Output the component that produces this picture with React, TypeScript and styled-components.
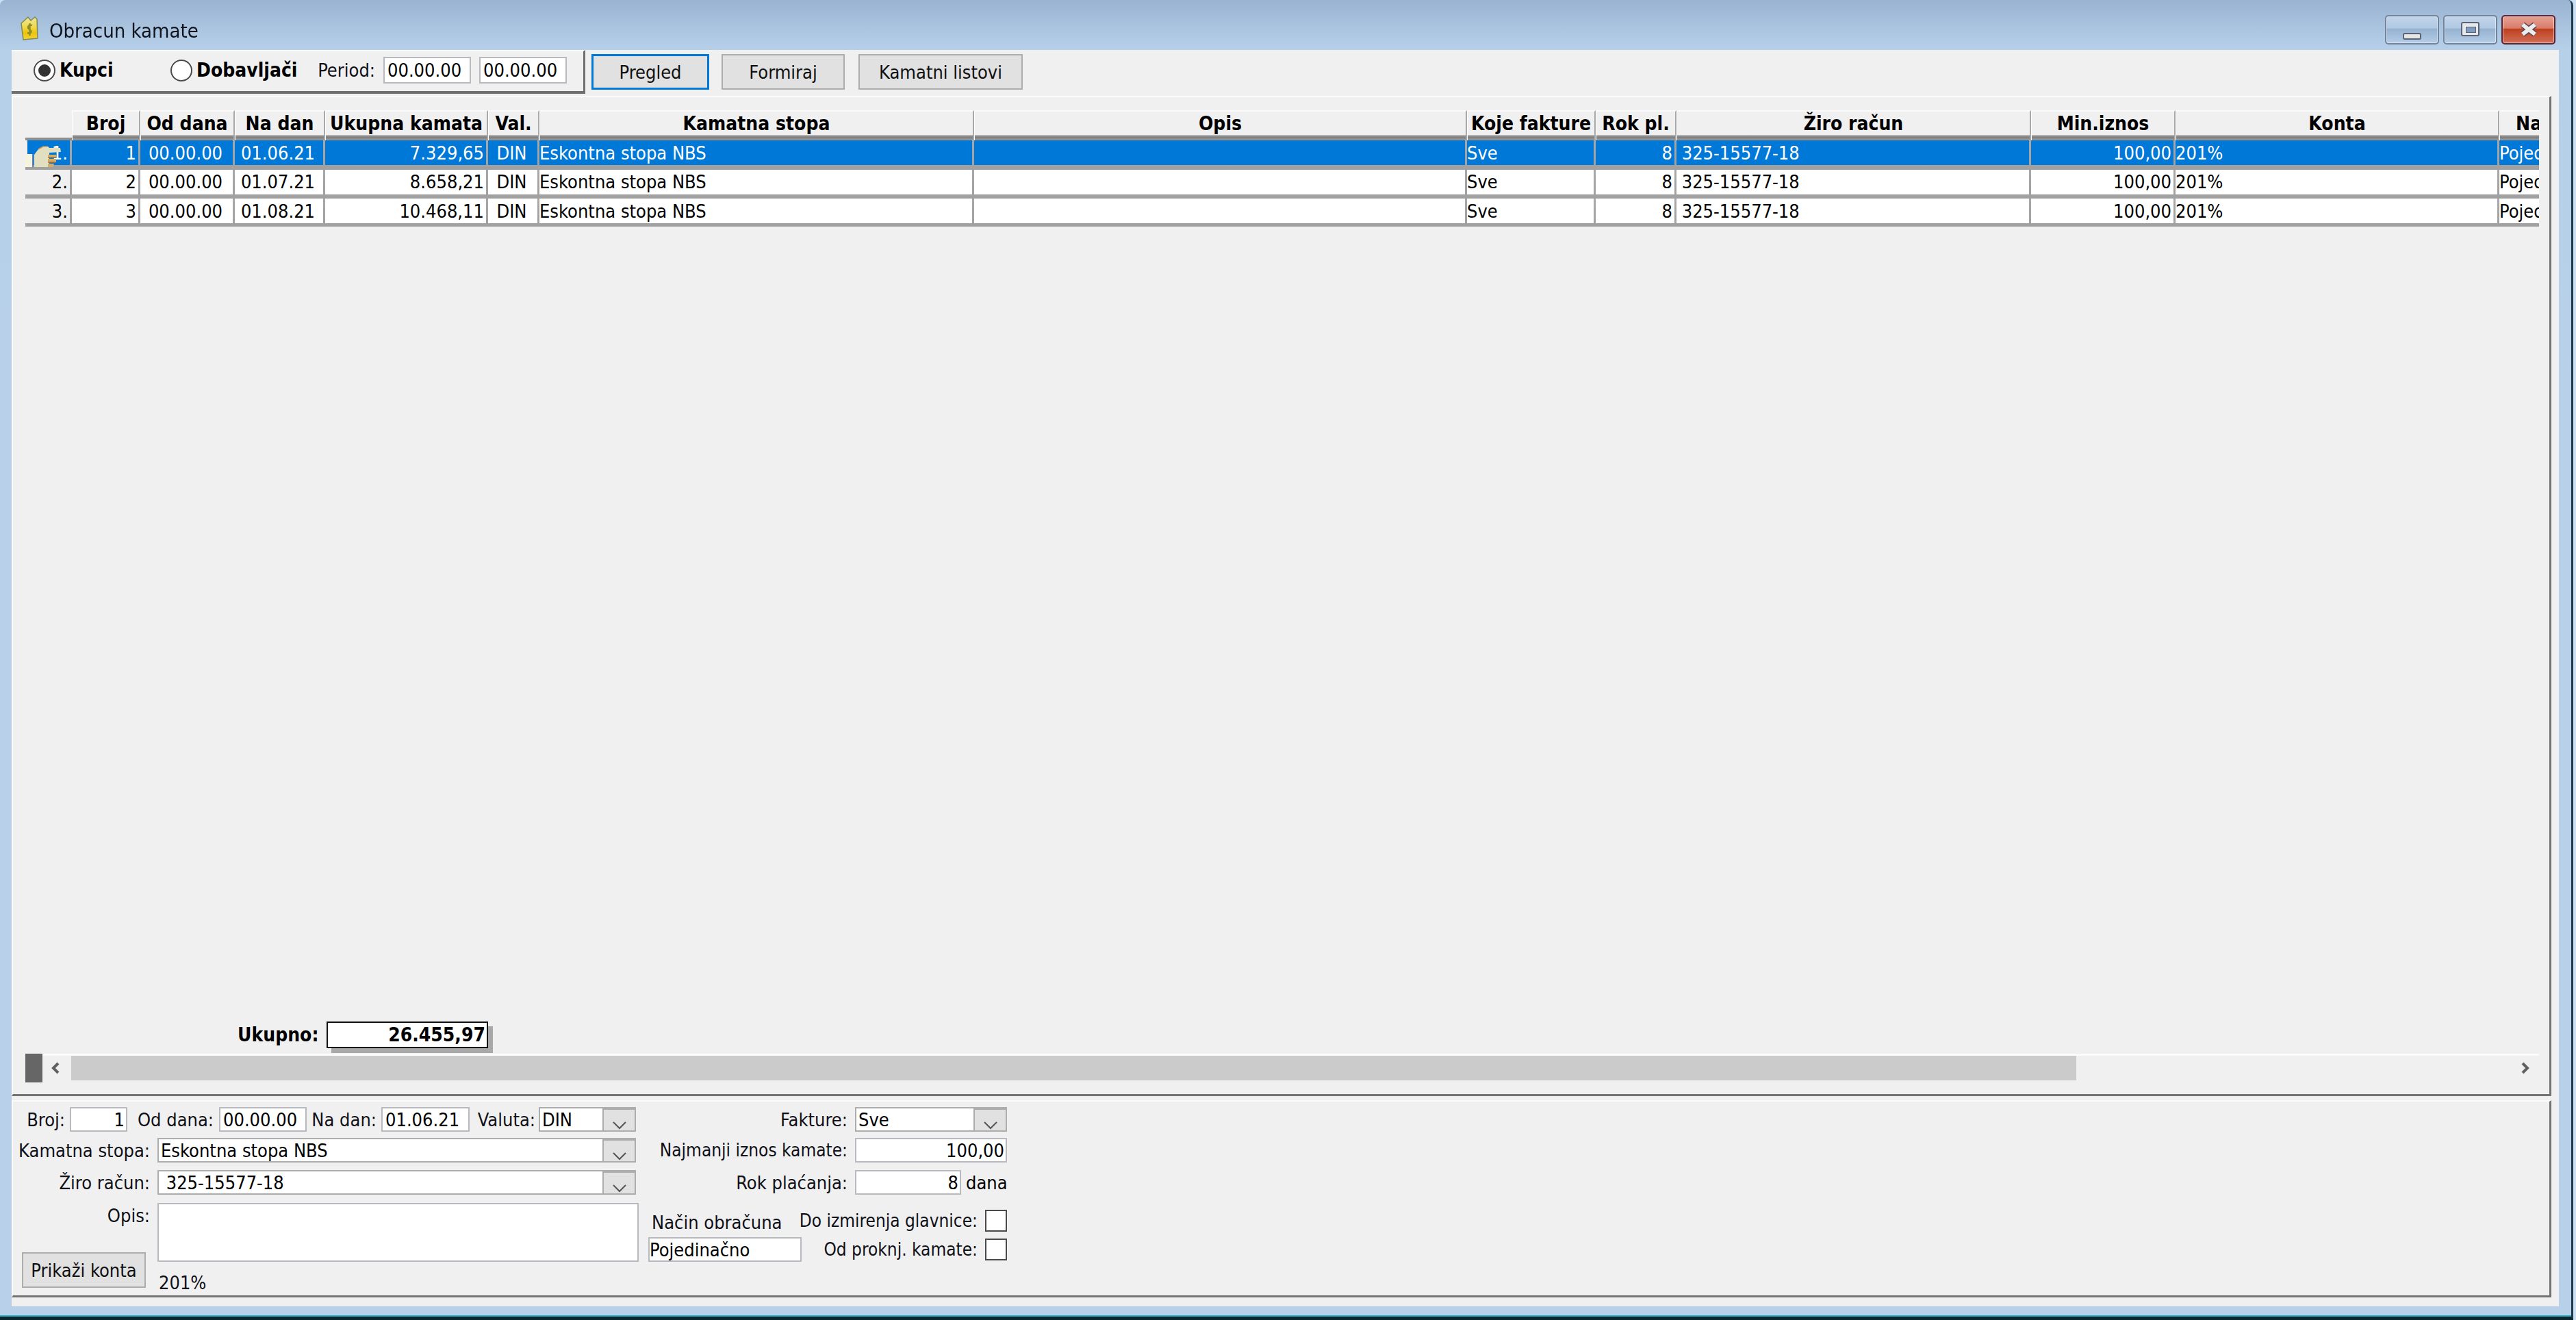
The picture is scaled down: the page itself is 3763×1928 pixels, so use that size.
import React from 'react';
import styled, { createGlobalStyle } from 'styled-components';

const GlobalStyle = createGlobalStyle`
	html, body {
		margin: 0;
		padding: 0;
		height: 1928px;
		overflow: hidden;
		background: #cddff2;
	}
	* {
		box-sizing: border-box;
	}
`;

const FONT = `'DejaVu Sans', 'Liberation Sans', sans-serif`;

const Window = styled.div`
	width: 3759px;
	height: 1928px;
	display: flex;
	flex-direction: column;
	padding-bottom: 15px;
	border-right: 3px solid #1d3a4a;
	border-bottom: 5px solid #0c2430;
	border-top-left-radius: 8px;
	border-top-right-radius: 8px;
	box-shadow: inset 0 -2px 0 #2fb5c4;
	background: linear-gradient(#9ab3d1 0, #b7d0ea 73px, #b9d0ea 100%);
	font-family: ${FONT};
	font-stretch: condensed;
	font-size: 27px;
	color: #000;
	filter: blur(0.5px);
`;

const TitleBar = styled.div`
	height: 73px;
	flex: none;
	display: flex;
	padding: 0 23px 0 30px;
`;

const TitleIcon = styled.svg`
	width: 26px;
	height: 36px;
	margin-top: 23px;
	flex: none;
`;

const TitleText = styled.div`
	margin: 29px 0 0 16px;
	font-size: 29px;
	line-height: 32px;
	color: #10141c;
`;

const Controls = styled.div`
	margin: 22px 0 0 auto;
	display: flex;
	gap: 6px;
`;

const ControlButton = styled.div<{ $close?: boolean }>`
	width: 79px;
	height: 43px;
	border-radius: 5px;
	display: flex;
	align-items: center;
	justify-content: center;
	border: 2px solid ${(p) => (p.$close ? '#5a2636' : '#71849c')};
	box-shadow: inset 0 0 0 1px rgba(255, 255, 255, 0.5);
	background: ${(p) =>
		p.$close
			? 'linear-gradient(#e8a294 0, #d87c6a 44%, #bf3f1e 47%, #d0705a 100%)'
			: 'linear-gradient(#c2d5eb 0, #b0c8e2 44%, #95b2d0 47%, #b5cde8 100%)'};
`;

const MinGlyph = styled.div`
	width: 27px;
	height: 10px;
	margin-top: 19px;
	background: #e6e6e6;
	border: 2px solid #5a6474;
	border-radius: 3px;
`;

const MaxGlyph = styled.div`
	width: 27px;
	height: 21px;
	margin-top: -2px;
	background: #e6e8ec;
	border: 2px solid #5a6474;
	border-radius: 3px;
	padding: 5px 5px;
	&::after {
		content: '';
		display: block;
		width: 100%;
		height: 100%;
		background: #7f9cbf;
		border: 1px solid #5a6474;
	}
`;

const CloseGlyph = styled.svg`
	width: 30px;
	height: 22px;
	margin-top: -1px;
`;

const Client = styled.div`
	flex: 1;
	min-height: 0;
	margin: 0 18px 0 17px;
	background: #f0f0f0;
	display: flex;
	flex-direction: column;
`;

const Toolbar = styled.div`
	height: 64px;
	flex: none;
	display: flex;
`;

const ToolPanel = styled.div`
	width: 838px;
	display: flex;
	align-items: center;
	padding: 0 0 3px 32px;
	border-top: 2px solid #fbfbfb;
	border-right: 3px solid #6f6f6f;
	border-bottom: 4px solid #6f6f6f;
`;

const RadioItem = styled.div<{ $w: number }>`
	width: ${(p) => p.$w}px;
	display: flex;
	align-items: center;
	gap: 6px;
	font-weight: bold;
	font-size: 28px;
`;

const RadioDot = styled.span<{ $on?: boolean }>`
	width: 32px;
	height: 32px;
	flex: none;
	border-radius: 50%;
	border: 2px solid #4a4a4a;
	background: #fff;
	display: flex;
	align-items: center;
	justify-content: center;
	&::after {
		content: '';
		width: 18px;
		height: 18px;
		border-radius: 50%;
		background: ${(p) => (p.$on ? '#333' : 'transparent')};
	}
`;

const ToolButtons = styled.div`
	display: flex;
	padding: 6px 0 0 9px;
	align-items: flex-start;
`;

const Button = styled.div<{ $w: number; $primary?: boolean; $ml?: number; $mt?: number }>`
	width: ${(p) => p.$w}px;
	height: 52px;
	flex: none;
	margin-left: ${(p) => p.$ml ?? 0}px;
	margin-top: ${(p) => p.$mt ?? 0}px;
	display: flex;
	align-items: center;
	justify-content: center;
	background: #e1e1e1;
	border: ${(p) => (p.$primary ? '3px solid #0078d7' : '2px solid #adadad')};
	color: #101010;
`;

const TextBox = styled.div<{ $w: number; $h?: number; $right?: boolean; $ml?: number; $pad?: number }>`
	width: ${(p) => p.$w}px;
	height: ${(p) => p.$h ?? 36}px;
	margin-left: ${(p) => p.$ml ?? 0}px;
	flex: none;
	background: #fff;
	border: 2px solid #b9b9c0;
	padding: 0 ${(p) => p.$pad ?? 4}px;
	display: flex;
	align-items: center;
	justify-content: ${(p) => (p.$right ? 'flex-end' : 'flex-start')};
	white-space: nowrap;
	overflow: hidden;
`;

const MainPanel = styled.div`
	margin: 3px 11px 0 0;
	height: 1461px;
	flex: none;
	display: flex;
	flex-direction: column;
	padding: 19px 15px 17px 18px;
	border-top: 2px solid #fbfbfb;
	border-left: 2px solid #fbfbfb;
	border-right: 3px solid #737373;
	border-bottom: 3px solid #737373;
`;

const COLUMNS = '68px 100px 138px 132px 238px 75px 635px 720px 188px 118px 518px 211px 473px 270px';

const Table = styled.div`
	overflow: hidden;
	flex: none;
	height: 170px;
`;

const TableHead = styled.div`
	display: grid;
	grid-template-columns: ${COLUMNS};
	width: max-content;
	height: 44px;
`;

const HeadBlank = styled.div`
	align-self: end;
	height: 4px;
	background: #8f8f8f;
`;

const HeadCell = styled.div`
	height: 44px;
	padding-bottom: 8px;
	border-top: 2px solid #fafafa;
	border-right: 2px solid #a8a8a8;
	border-left: 1px solid #fff;
	font-weight: bold;
	font-size: 28px;
	display: flex;
	align-items: center;
	justify-content: center;
	white-space: nowrap;
	overflow: hidden;
	background: linear-gradient(#f0f0f0 0 34px, #c4c4c4 34px, #7d7d7d 37px, #9c9c9c 42px);
`;

const BodyRow = styled.div`
	display: grid;
	grid-template-columns: ${COLUMNS};
	width: max-content;
	height: 42.5px;
	background: linear-gradient(#a8a8a8 0, #a0a0a0 100%);
`;

const Cell = styled.div<{ $selected?: boolean; $align?: 'start' | 'center' | 'end' }>`
	height: 36px;
	margin-right: 3px;
	padding: 0 3px 0 0;
	display: flex;
	align-items: center;
	justify-content: ${(p) => (p.$align === 'end' ? 'flex-end' : p.$align === 'center' ? 'center' : 'flex-start')};
	white-space: nowrap;
	overflow: hidden;
	background: ${(p) => (p.$selected ? '#0078d7' : '#fff')};
	color: ${(p) => (p.$selected ? '#fff' : '#000')};
`;

const IndicatorCell = styled(Cell)`
	position: relative;
	overflow: visible;
	background: ${(p) => (p.$selected ? '#0078d7' : '#f0f0f0')};
	border-left: ${(p) => (p.$selected ? '3px solid #f0f0f0' : 'none')};
`;

const HandPointer = styled.svg`
	position: absolute;
	left: -3px;
	top: 8px;
	width: 58px;
	height: 31px;
`;

const TotalsRow = styled.div`
	margin-top: auto;
	display: flex;
	align-items: center;
	padding-left: 310px;
	font-weight: bold;
	font-size: 28px;
`;

const TotalsLabel = styled.div`
	width: 130px;
`;

const TotalsBox = styled.div`
	width: 236px;
	height: 39px;
	background: #fff;
	border: 2px solid #111;
	box-shadow: 7px 7px 0 #a8a8a8;
	padding: 0 2px;
	display: flex;
	align-items: center;
	justify-content: flex-end;
`;

const ScrollRow = styled.div`
	margin-top: 8px;
	height: 42px;
	flex: none;
	display: flex;
`;

const ScrollGrip = styled.div`
	width: 25px;
	background: #666;
`;

const ScrollTrack = styled.div`
	flex: 1;
	height: 39px;
	border-top: 3px solid #fbfbfb;
	display: flex;
`;

const ScrollButton = styled.div<{ $end?: boolean }>`
	display: flex;
	align-items: center;
	flex: ${(p) => (p.$end ? '1' : 'none')};
	width: ${(p) => (p.$end ? 'auto' : '42px')};
	justify-content: ${(p) => (p.$end ? 'flex-end' : 'flex-start')};
	padding: ${(p) => (p.$end ? '0 12px 0 0' : '0 0 0 11px')};
`;

const ScrollArrow = styled.svg`
	width: 17px;
	height: 18px;
	flex: none;
`;

const ScrollThumb = styled.div`
	width: 2929px;
	height: 100%;
	background: #cbcbcb;
`;

const FormPanel = styled.div`
	margin: 6px 11px 0 0;
	height: 288px;
	flex: none;
	display: flex;
	padding-top: 8px;
	border-top: 2px solid #fbfbfb;
	border-left: 2px solid #fbfbfb;
	border-right: 3px solid #737373;
	border-bottom: 3px solid #737373;
`;

const LeftForm = styled.div`
	width: 928px;
	flex: none;
	display: grid;
	grid-template-rows: 35px 37px 38px auto;
	row-gap: 10px;
	align-content: start;
`;

const FormRow = styled.div<{ $pl?: number }>`
	display: flex;
	align-items: flex-start;
	padding-left: ${(p) => p.$pl ?? 11}px;
`;

const Label = styled.div<{ $w: number; $ml?: number; $mr?: number; $fs?: number }>`
	width: ${(p) => p.$w}px;
	height: 36px;
	flex: none;
	margin-left: ${(p) => p.$ml ?? 0}px;
	margin-right: ${(p) => p.$mr ?? 0}px;
	font-size: ${(p) => p.$fs ?? 27}px;
	display: flex;
	align-items: center;
	justify-content: flex-end;
	white-space: nowrap;
	color: #101018;
`;

const Combo = styled.div<{ $w: number }>`
	width: ${(p) => p.$w}px;
	height: 36px;
	flex: none;
	display: flex;
	background: #adadad;
	padding: 2px;
`;

const ComboValue = styled.div`
	flex: 1;
	min-width: 0;
	background: #fff;
	padding: 0 3px;
	display: flex;
	align-items: center;
	white-space: nowrap;
`;

const ComboArrow = styled.div`
	width: 45px;
	margin: 2px 0 0 2px;
	background: #e1e1e1;
	display: flex;
	align-items: flex-end;
	justify-content: center;
	padding-bottom: 1px;
`;

const ComboChevron = styled.svg`
	width: 22px;
	height: 12px;
`;

const OpisColumn = styled.div`
	width: 200px;
	flex: none;
	display: flex;
	flex-direction: column;
`;

const OpisBody = styled.div`
	display: flex;
	flex-direction: column;
`;

const AccountsText = styled.div`
	margin-top: 18px;
	padding-left: 2px;
	line-height: 26px;
	color: #101018;
`;

const RightForm = styled.div`
	width: 524px;
	flex: none;
	display: grid;
	grid-template-columns: minmax(0, 1fr);
	grid-template-rows: 35px 37px 38px auto;
	row-gap: 10px;
	align-content: start;
`;

const RightRow = styled.div`
	display: flex;
	align-items: flex-start;
`;

const Unit = styled.div`
	height: 36px;
	margin-left: 7px;
	display: flex;
	align-items: center;
`;

const BottomBlock = styled.div`
	display: flex;
	align-items: flex-start;
`;

const MethodColumn = styled.div`
	width: 224px;
	flex: none;
	display: flex;
	flex-direction: column;
`;

const MethodLabel = styled.div`
	height: 36px;
	margin: 10px 0 4px 5px;
	display: flex;
	align-items: center;
	white-space: nowrap;
	color: #101018;
`;

const CheckColumn = styled.div`
	flex: 1;
	min-width: 0;
	display: flex;
	flex-direction: column;
	align-items: flex-end;
	gap: 10px;
	padding-top: 10px;
`;

const CheckRow = styled.div`
	display: flex;
	align-items: center;
	gap: 11px;
	height: 32px;
	font-size: 26px;
	white-space: nowrap;
	color: #101018;
`;

const CheckBox = styled.span`
	width: 32px;
	height: 32px;
	flex: none;
	background: #fff;
	border: 2px solid #4a4a4a;
`;

const columnsText = [
	'Broj',
	'Od dana',
	'Na dan',
	'Ukupna kamata',
	'Val.',
	'Kamatna stopa',
	'Opis',
	'Koje fakture',
	'Rok pl.',
	'Žiro račun',
	'Min.iznos',
	'Konta',
	'Način obračuna',
];

const rows = [
	{ no: 1, to: '01.06.21', total: '7.329,65' },
	{ no: 2, to: '01.07.21', total: '8.658,21' },
	{ no: 3, to: '01.08.21', total: '10.468,11' },
];

const Chevron = () => (
	<ComboChevron viewBox="0 0 22 12">
		<polyline points="2,1 11,10 20,1" fill="none" stroke="#555" strokeWidth="2" />
	</ComboChevron>
);

const JarIcon = () => (
	<TitleIcon viewBox="0 0 26 36">
		<defs>
			<linearGradient id="jarFill" x1="0" y1="0" x2="0" y2="1">
				<stop offset="0" stopColor="#efe79a" />
				<stop offset="0.45" stopColor="#efd84a" />
				<stop offset="0.7" stopColor="#eec40a" />
				<stop offset="1" stopColor="#f2d23a" />
			</linearGradient>
		</defs>
		<path d="M1 11 L11 2 L15 7 L21 2 L24 5 L25 33 L4 35 Z" fill="url(#jarFill)" stroke="#7d8a58" strokeWidth="1.5" />
		<path d="M17 14 C11 12 9 18 13 20 C17 22 16 27 10 25 M13.5 11 L13.5 29" fill="none" stroke="#8f8f2a" strokeWidth="2.5" />
	</TitleIcon>
);

const Hand = () => (
	<HandPointer viewBox="0 0 58 31">
		<rect x="0" y="12" width="10" height="19" fill="#f6f3dc" />
		<rect x="10" y="12" width="2" height="19" fill="#5f86b8" />
		<path d="M13 31 L13 13 L19 5 L26 1 L33 1 L35 3 L51 3 L52 9 L35 10 L35 31 Z" fill="#e2dfc0" />
		<path d="M33 13 L45 13 L46 17 L33 17 Z M33 19 L45 19 L45 24 L33 24 Z M33 26 L42 26 L41 31 L33 31 Z" fill="#d2ad6c" />
		<path d="M33 17 L45 17 M33 24 L44 24" stroke="#a5702e" strokeWidth="1.5" />
		<path d="M19 5 L26 1 L33 1" fill="none" stroke="#c89a58" strokeWidth="1.5" />
	</HandPointer>
);

export default function App() {
	return (
		<>
			<GlobalStyle />
			<Window>
				<TitleBar>
					<JarIcon />
					<TitleText>Obracun kamate</TitleText>
					<Controls>
						<ControlButton>
							<MinGlyph />
						</ControlButton>
						<ControlButton>
							<MaxGlyph />
						</ControlButton>
						<ControlButton $close>
							<CloseGlyph viewBox="0 0 30 22">
								<path d="M6 4 L24 18 M24 4 L6 18" fill="none" stroke="#5c4a50" strokeWidth="9" />
								<path d="M6 4 L24 18 M24 4 L6 18" fill="none" stroke="#ececec" strokeWidth="6" />
							</CloseGlyph>
						</ControlButton>
					</Controls>
				</TitleBar>
				<Client>
					<Toolbar>
						<ToolPanel>
							<RadioItem $w={200}>
								<RadioDot $on />
								Kupci
							</RadioItem>
							<RadioItem $w={215}>
								<RadioDot />
								Dobavljači
							</RadioItem>
							<Label $w={84} $mr={12}>Period:</Label>
							<TextBox $w={128} $h={39}>00.00.00</TextBox>
							<TextBox $w={128} $h={39} $ml={12}>00.00.00</TextBox>
						</ToolPanel>
						<ToolButtons>
							<Button $w={172} $primary>Pregled</Button>
							<Button $w={180} $ml={18}>Formiraj</Button>
							<Button $w={240} $ml={20}>Kamatni listovi</Button>
						</ToolButtons>
					</Toolbar>
					<MainPanel>
						<Table>
							<TableHead>
								<HeadBlank />
								{columnsText.map((c) => (
									<HeadCell key={c}>{c}</HeadCell>
								))}
							</TableHead>
							{rows.map((r, i) => {
								const sel = i === 0;
								return (
									<BodyRow key={r.no}>
										<IndicatorCell $selected={sel} $align="end">
											{r.no}.
											{sel && <Hand />}
										</IndicatorCell>
										<Cell $selected={sel} $align="end">{r.no}</Cell>
										<Cell $selected={sel} $align="center">00.00.00</Cell>
										<Cell $selected={sel} $align="center">{r.to}</Cell>
										<Cell $selected={sel} $align="end">{r.total}</Cell>
										<Cell $selected={sel} $align="center">DIN</Cell>
										<Cell $selected={sel}>Eskontna stopa NBS</Cell>
										<Cell $selected={sel} />
										<Cell $selected={sel}>Sve</Cell>
										<Cell $selected={sel} $align="end">8</Cell>
										<Cell $selected={sel}>&nbsp;325-15577-18</Cell>
										<Cell $selected={sel} $align="end">100,00</Cell>
										<Cell $selected={sel}>201%</Cell>
										<Cell $selected={sel}>Pojedinačno</Cell>
									</BodyRow>
								);
							})}
						</Table>
						<TotalsRow>
							<TotalsLabel>Ukupno:</TotalsLabel>
							<TotalsBox>26.455,97</TotalsBox>
						</TotalsRow>
						<ScrollRow>
							<ScrollGrip />
							<ScrollTrack>
								<ScrollButton>
									<ScrollArrow viewBox="0 0 17 18">
										<polyline points="12,2 5,9 12,16" fill="none" stroke="#606060" strokeWidth="4" />
									</ScrollArrow>
								</ScrollButton>
								<ScrollThumb />
								<ScrollButton $end>
									<ScrollArrow viewBox="0 0 17 18">
										<polyline points="5,2 12,9 5,16" fill="none" stroke="#606060" strokeWidth="4" />
									</ScrollArrow>
								</ScrollButton>
							</ScrollTrack>
						</ScrollRow>
					</MainPanel>
					<FormPanel>
						<LeftForm>
							<FormRow $pl={18}>
								<Label $w={58} $mr={7}>Broj:</Label>
								<TextBox $w={84} $right $pad={2}>1</TextBox>
								<Label $w={112} $ml={14} $mr={8}>Od dana:</Label>
								<TextBox $w={128}>00.00.00</TextBox>
								<Label $w={95} $ml={7} $mr={7}>Na dan:</Label>
								<TextBox $w={129}>01.06.21</TextBox>
								<Label $w={84} $ml={12} $mr={5}>Valuta:</Label>
								<Combo $w={142}>
									<ComboValue>DIN</ComboValue>
									<ComboArrow><Chevron /></ComboArrow>
								</Combo>
							</FormRow>
							<FormRow>
								<Label $w={189} $mr={11}>Kamatna stopa:</Label>
								<Combo $w={699}>
									<ComboValue>Eskontna stopa NBS</ComboValue>
									<ComboArrow><Chevron /></ComboArrow>
								</Combo>
							</FormRow>
							<FormRow>
								<Label $w={189} $mr={11}>Žiro račun:</Label>
								<Combo $w={699}>
									<ComboValue>&nbsp;325-15577-18</ComboValue>
									<ComboArrow><Chevron /></ComboArrow>
								</Combo>
							</FormRow>
							<FormRow>
								<OpisColumn>
									<Label $w={189}>Opis:</Label>
									<Button $w={181} $ml={2} $mt={36}>Prikaži konta</Button>
								</OpisColumn>
								<OpisBody>
									<TextBox $w={703} $h={86} />
									<AccountsText>201%</AccountsText>
								</OpisBody>
							</FormRow>
						</LeftForm>
						<RightForm>
							<RightRow>
								<Label $w={291} $mr={11}>Fakture:</Label>
								<Combo $w={222}>
									<ComboValue>Sve</ComboValue>
									<ComboArrow><Chevron /></ComboArrow>
								</Combo>
							</RightRow>
							<RightRow>
								<Label $w={291} $mr={11} $fs={26}>Najmanji iznos kamate:</Label>
								<TextBox $w={222} $right $pad={2}>100,00</TextBox>
							</RightRow>
							<RightRow>
								<Label $w={291} $mr={11}>Rok plaćanja:</Label>
								<TextBox $w={155} $right $pad={2}>8</TextBox>
								<Unit>dana</Unit>
							</RightRow>
							<BottomBlock>
								<MethodColumn>
									<MethodLabel>Način obračuna</MethodLabel>
									<TextBox $w={224} $pad={0}>Pojedinačno</TextBox>
								</MethodColumn>
								<CheckColumn>
									<CheckRow>Do izmirenja glavnice:<CheckBox /></CheckRow>
									<CheckRow>Od proknj. kamate:<CheckBox /></CheckRow>
								</CheckColumn>
							</BottomBlock>
						</RightForm>
					</FormPanel>
				</Client>
			</Window>
		</>
	);
}
